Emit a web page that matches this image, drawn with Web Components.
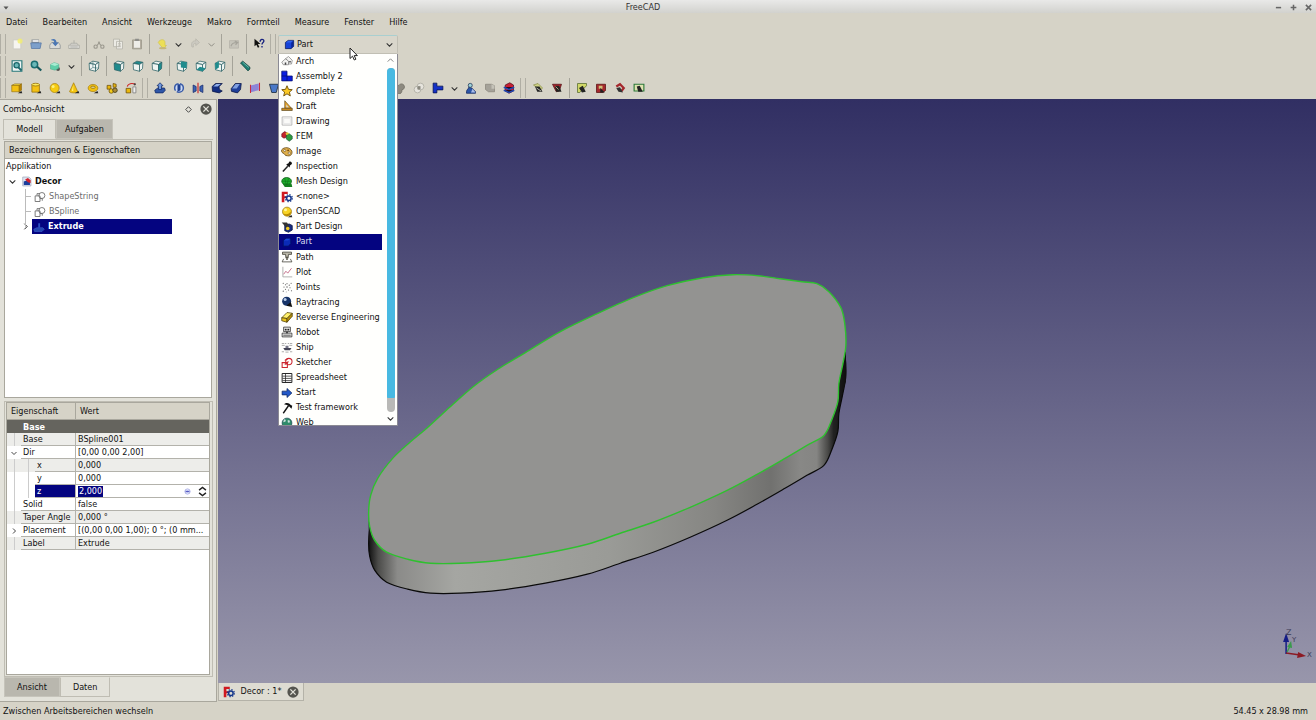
<!DOCTYPE html>
<html lang="de">
<head>
<meta charset="utf-8">
<title>FreeCAD</title>
<style>
html, body { margin: 0; height: 100%; }
body {
  --bg: #d6d3c7; --panel: #e3e2da; --tab: #b9b7ae; --line: #a9a79d; --sel: #040480;
  font: 9px/15px "DejaVu Sans Condensed", "DejaVu Sans", sans-serif;
  color: #111; background: var(--bg); overflow: hidden;
}
</style>
</head>
<body>
<app-window></app-window>
<script>
/* ---------- icons (16x16 drawings) ---------- */
const cube = (top, front, side, line) =>
  `<g stroke="${line}" stroke-width="1" stroke-linejoin="round"><path fill="${top}" d="M1.500 4.500 6.500 1.500 14.500 3 10 6z"/><path fill="${front}" d="M1.500 4.500 10 6v9l-8-2z"/><path fill="${side}" d="M10 6l4.500-3-.5 8.500L10 15z"/></g>`;
const teal = '#1f8b8d', pale = '#eef4f2', tl = '#2c6266';
const solid = body => body + '<path fill="#222" d="M9 15l5-3 1 3z"/>';
const gearF = '<path fill="#cf1820" d="M1 1h8v3H4.500v3H8v2.500H4.500V15H1z"/><g fill="none" stroke="#15378c"><circle cx="10.500" cy="9.500" r="3" stroke-width="2"/><circle cx="10.500" cy="9.500" r="4.700" stroke-width="1.600" stroke-dasharray="1.800 1.900"/></g>';
const ICONS = {
  'new': '<path fill="#f6f5f0" stroke="#c9c8c2" d="M3 2.500h10v12H3z"/><circle cx="12" cy="4" r="3.400" fill="#f4ef6a" opacity=".8"/>',
  open: '<path fill="#8a9097" d="M2 2h10v5H2z"/><path fill="#fff" d="M3.500 3h8v2h-8z"/><path fill="#7c9fcb" stroke="#5577a6" d="M1 6.500h14L13.500 14H2z"/>',
  save: '<path fill="#d9dad8" stroke="#8b8f92" d="M1 9.500 3.500 6h9L15 9.500V14H1z"/><path fill="#4a76b4" d="M3 2c4-2 7 0 7 4h3L8.500 11 4 6h3c0-2-1-3-4-3z"/>',
  print: '<path fill="#e0e0dc" stroke="#a4a49e" d="M1 9.500h14V14H1zM3 9l1-2h8l1 2M8 7V3"/><path stroke="#9c9c96" d="M3 12h10"/>',
  cut: '<g fill="none" stroke="#9a978d" stroke-width="1.500"><path d="M5.500 10 9 5M10.500 10 7 5"/><circle cx="3.500" cy="11.500" r="2.200"/><circle cx="12.500" cy="11.500" r="2.200"/></g>',
  copy: '<path fill="#ecebe5" stroke="#b2b0a7" d="M2 1.500h8v10H2zM6 4.500h8v10H6z"/><path stroke="#bbb9b0" d="M8 7.500h4M8 9.500h4M8 11.500h4"/>',
  paste: '<path fill="#b3ada0" stroke="#9a9588" d="M2 2.500h12v12H2z"/><path fill="#eeede8" d="M4 4h8v9H4z"/><path fill="#8d8d8a" d="M5.500 1h5v3h-5z"/>',
  undo: '<path fill="#ecdf57" stroke="#d2c654" d="M3 6c2-5 9-5 9 0v4h2l-4 4-4-4z"/><ellipse cx="9" cy="13.500" rx="5" ry="1.500" fill="#c5b77a"/>',
  redo: '<path fill="#cbc9c0" stroke="#b8b6ac" d="M4 12c-2-5 1-9 5-8V1l5 5-5 4V7C6 7 5 9 6 12z"/>',
  refresh: '<path fill="#c6c4ba" stroke="#b4b2a8" d="M2 3.500h12v10H2z"/><path fill="none" stroke="#a5a39a" stroke-width="1.500" d="M4 11c1-4 4-5 8-5M9 4l4 2-3 3"/>',
  whats: '<path fill="#111" d="M2 1v10l2.500-2L6.500 13l2-1-2-4H10z"/><path fill="none" stroke="#16207e" stroke-width="1.800" d="M9.500 5c0-4 5-4 5-1 0 2-2.500 2-2.500 4.500M12 10.500v2"/>',
  fit: '<path fill="#f1f6f5" stroke="#26777a" stroke-width="1.500" d="M1.500 1h13v14h-13z"/><circle cx="7.500" cy="7" r="3.500" fill="#6ab8b8" stroke="#18666a" stroke-width="1.800"/><path stroke="#18666a" stroke-width="2.400" d="m10 10 4 4"/>',
  zoom: '<circle cx="6" cy="6" r="4.200" fill="#6ab8b8" stroke="#1a6d70" stroke-width="2"/><path stroke="#17595c" stroke-width="3" d="m9.500 9 5.500 5"/>',
  draw: '<circle cx="12" cy="12" r="2.600" fill="#333" opacity=".8"/><path fill="#61cfa9" stroke="#3da584" stroke-width=".6" d="M2 6 7 3.500l6 2v5.500L8 13.500 2 12z"/><path fill="#a9ecd2" d="M2 6 7 3.500l6 2-5 2.500z"/>',
  axo: cube(pale, pale, pale, tl) + `<path fill="none" stroke="${tl}" stroke-width=".7" d="M6.500 2v8l8 1M6.500 10 2 13"/>`,
  front: cube(pale, teal, pale, tl), top: cube(teal, pale, pale, tl), right: cube(pale, pale, teal, tl),
  rear: cube(pale, pale, pale, tl) + `<path fill="${teal}" d="M6.500 2l8 1-.5 8-7.500-1z"/>`,
  bottom: cube(pale, pale, pale, tl) + `<path fill="${teal}" d="M2 13 6.500 9l7.500 2-4 4z"/>`,
  left: cube(pale, pale, pale, tl) + `<path fill="${teal}" d="M1.500 4.500 6.500 1.500V10L2 13z"/>`,
  measure: '<path fill="#1f7f74" stroke="#123f3b" d="m2 4 3-2.500 9.500 8V12l-2.500 2.500z"/><path stroke="#9bd6ca" stroke-width=".8" d="m5 3 8 7"/>',
  box: solid('<g stroke="#8f6a08" stroke-width=".8"><path fill="#fce94f" d="M1 4.500 5 2.500h9l-3 2z"/><path fill="#f3c114" d="M1 4.500h10v8.500H1z"/><path fill="#b98300" d="m11 4.500 3-2v8.500l-3 2z"/></g>'),
  cyl: solid('<path fill="#f3c114" stroke="#8f6a08" d="M2.500 3.500v10h10v-10z"/><ellipse cx="7.500" cy="3.500" rx="5" ry="1.800" fill="#fdea5b" stroke="#8f6a08"/>'),
  sphere: solid('<circle cx="7.500" cy="8" r="6" fill="#f6cb12" stroke="#a98310"/><circle cx="5.500" cy="6" r="2" fill="#fdf07c"/>'),
  cone: solid('<path fill="#f4c410" stroke="#a98310" d="M7.500 1 13 13c-2 2-9 2-11 0z"/><path fill="#fdf07c" d="M7 4 5 12h2z"/>'),
  torus: solid('<ellipse cx="8" cy="8" rx="6.500" ry="4.800" fill="#f2c010" stroke="#a98310"/><ellipse cx="8" cy="7" rx="3" ry="1.500" fill="#e6dca0" stroke="#8c6a08"/>'),
  prims: '<path fill="#e9b70e" stroke="#6a4b05" d="M1.500 4.500h5v5h-5zM9.500 2l4 1v4h-4z"/><circle cx="7" cy="12" r="3" fill="#f4cb1a" stroke="#6a4b05"/><circle cx="12" cy="11" r="3" fill="#a98b3a" stroke="#3e350f"/>',
  builder: '<path fill="#e9b70e" stroke="#6a4b05" d="M1.500 8.500h6v6h-6z"/><path fill="#eee" stroke="#777" d="M10.500 6.500h4v8h-4z"/><path fill="none" stroke="#cc2222" stroke-width="1.500" d="M3 6c1-4 6-5 11-3"/><circle cx="13" cy="3" r="1.500" fill="#444"/>',
  extrude: '<path fill="#2e56a8" stroke="#132a66" d="m1 11 4-3h9l1 3-3 3.500H2z"/><path fill="#6e97de" stroke="#132a66" d="M8 1l4 4h-2v5H6V5H4z"/>',
  revolve: '<circle cx="8" cy="8" r="5.800" fill="#cfdcf5" stroke="#3a5ca8" stroke-width="2" stroke-dasharray="12 2"/><path fill="#1d3f92" d="M6 3h4v8l-4 2z"/>',
  mirror: '<path fill="#3b62b6" stroke="#15296a" d="m1.500 4 4 2v6l-4 2zM14.500 4l-4 2v6l4 2z"/><path stroke="#c22" stroke-width="1.500" d="M8 1v14"/>',
  fillet: '<path fill="#122d80" stroke="#0b1644" d="M1.500 6 6 2h9l-4 4c-1 3 1 5 4 6l-4 2.500-9-2z"/><path fill="#8faee8" d="m3 6 4-3.500h6L9 6z"/>',
  chamfer: '<path fill="#1f3f9a" stroke="#0b1644" d="M1.500 9 7 2h8l-1 8-4 4.500-8-2z"/><path fill="#7f9fe0" d="m3 8.500 4.500-6H13l-4 6z"/>',
  ruled: '<path fill="#8d84d8" d="M2 4.500 13 2v9L2 13.500z"/><path fill="none" stroke="#c92a3f" stroke-width="1.400" d="M2 3.500v11M14 1v11"/>',
  loft: '<path fill="#4a78c8" stroke="#123" d="M2 3h12l-3 11H5z"/>',
  union: '<path fill="#8d8a80" stroke="#6e6b62" d="M1.500 8.500a4 4 0 0 1 5-4 4 4 0 1 1 4 6 5 5 0 1 1-9-2z"/>',
  common: '<circle cx="6" cy="10" r="4.500" fill="#e6e4dd" stroke="#aaa89e"/><circle cx="10" cy="6" r="4.500" fill="#e6e4dd" stroke="#aaa89e"/><path fill="#8a887e" d="M6 5.500h4v4.500H6z"/>',
  assembly: '<path fill="#1330c8" stroke="#04104e" d="M1.500 1.500h5v4h8v5h-8v4h-5z"/>',
  asm2: '<path fill="#0a1ee0" stroke="#040e6e" d="M1 1.500h7v6.500h7v6.500H1z"/><path stroke="#040e6e" d="M8 8v6.500M1 8h7"/>',
  section: '<path fill="#2c56a8" stroke="#10245e" d="M2 13c0-3 3-4 3-6l4 1 5 5v2H2z"/><circle cx="7" cy="4.500" r="2.700" fill="#9fd4d8" stroke="#235"/><path fill="#a9bce8" d="M10 9l4 5H8z"/>',
  grey: '<path fill="#a5a299" stroke="#89867c" d="M2 3h8l4 2v8H6l-4-3z"/><path fill="#c4c2b8" d="M10 3l4 2v4h-4z"/>',
  cross: '<path fill="#c81e34" stroke="#54101c" d="M3 4 9 1l5 3v8l-6 3-5-3z"/><path stroke="#2248b4" stroke-width="2" d="M1 7l7 3 7-3M1 11l7 3 7-3"/>',
  mlin: '<path fill="#cfd285" stroke="#8a8d4a" d="M2 4l6-2 6 6-3 3z"/><path fill="#222" d="M4 6h6l4 7H7z"/><path stroke="#e8e8d8" d="m6 8 6 4"/>',
  mang: '<path fill="#b3222a" stroke="#4d1115" d="M2 3h12l-3 9-4 1z"/><path fill="#222" d="M5 5h6l3 8H7z"/><path stroke="#dc9" d="m6 6 4 4"/>',
  mref: '<path fill="#d0d768" stroke="#54682e" d="M2 2h12v3L5 14H2z"/><path fill="#222" d="m4 8 5-3 4 8-5 1z"/>',
  mclr: '<path fill="#a5282d" stroke="#511" d="M2 3h12v8l-3 3H2z"/><path fill="#cfc078" d="M5 5h5v4H5z"/><path fill="#222" d="m7 8 6 6H7z"/>',
  mtog: '<path fill="none" stroke="#a5282d" stroke-width="3" d="m3 6 5-3 5 5-3 4"/><path fill="#333" d="m3 8 5-1 4 7-6-1z"/>',
  mdel: '<path fill="#dfe2b0" stroke="#2d7a3a" stroke-width="1.500" d="M1.500 3h13v9h-13z"/><path fill="#222" d="m5 6 4-1 4 8H7z"/>',
  arch: '<g fill="#f2f2f0" stroke="#777" stroke-width=".9"><path d="M1 9.500 6 5l4 3v5H3z"/><path d="m6 5 4-3 5 5-1 5h-4V8z"/></g><path fill="#444" d="M5 10h2v3H5zM11 8h2v2h-2z"/>',
  complete: '<path fill="#fbc926" stroke="#6b4c06" stroke-width="1.200" stroke-linejoin="round" d="m8 1 2 4.800 5 .4-3.800 3.300 1.200 5L8 11.800l-4.400 2.700 1.200-5L1 6.200l5-.4z"/>',
  draft: '<path fill="#e7a52c" stroke="#4e3a10" stroke-width=".8" d="M5 1 14 11H5z"/><path fill="#cfd6da" d="m7 6 3.500 4H7z"/><path fill="#c98a20" stroke="#4e3a10" stroke-width=".8" d="M1 11h14v3H1z"/>',
  drawing: '<path fill="#fafaf8" stroke="#aaa" d="M1.500 2.500h13v11h-13z"/><path fill="none" stroke="#e2e2e0" d="M3.500 4.500h9v7h-9z"/>',
  fem: '<path fill="#c3232b" stroke="#501" stroke-width=".7" d="m1 5 4-3 3 2v5l-4 2-3-2z"/><path fill="#2f9b3d" stroke="#143" stroke-width=".7" d="m7 7 4-2 4 3v4l-4 3-4-3z"/><path fill="#e2c83a" d="M6 4l3-1 2 2-4 2z"/>',
  image: '<path fill="#e0b04a" stroke="#5a3c0a" d="M1 5c3-4 11-4 13.500 2 1 4-2 7-6 6C5 13 5 11 4 10 2 9.500 0 8 1 5z"/><circle cx="5" cy="6" r="1.400" fill="#fff" stroke="#5a3c0a" stroke-width=".7"/><circle cx="9.500" cy="5.800" r="1.300" fill="#7a4d10"/><circle cx="11" cy="9.500" r="1.500" fill="#fff" stroke="#5a3c0a" stroke-width=".7"/>',
  inspection: '<path fill="#111" d="m8 4 2-1 1-2c2-1 4 1 3.500 3L12 6l-.5 2.500L7 5z"/><path stroke="#222" stroke-width="2" d="M9 7 2.500 14"/>',
  mesh: '<ellipse cx="7.500" cy="7" rx="6.500" ry="5" fill="#1fae2c" stroke="#0b5a14"/><path fill="#15801f" d="M2 10h12l1 4.500H5z"/><path fill="none" stroke="#0e6a18" stroke-width=".7" d="M2 7h11M5 3l2 9M10 3 8 12"/>',
  none: gearF, openscad: solid('<circle cx="8" cy="7.500" r="6" fill="#f8d323" stroke="#9a7608"/><path fill="#b98b00" d="M3 10c4 2 8 1 10-3 1 7-6 9-10 3z"/><circle cx="6" cy="5" r="2" fill="#fff59a"/>'),
  partdesign: '<path fill="#162d86" stroke="#0a1238" d="m5 5 6-1 4 2v6l-5 3-5-2z"/><path fill="#333" d="M1 2l7 0 3 5-3 3z"/><circle cx="9" cy="10" r="2.400" fill="#f0c822"/>',
  part: '<path fill="#1642d8" stroke="#04124e" d="M2 5 6 2h8v8.500L10.500 14H2z"/><path fill="#0a2596" d="m10.500 5.500 3-3v8l-3 3z"/><path fill="#2f62f0" d="M3 5 6.500 2.500H13L10 5z"/>',
  partdim: '<path fill="#0a2bb8" stroke="#02105e" d="M3 6 6.500 3H13v7l-3 3.500H3z"/><path fill="#1c44d4" d="M4 6 7 3.500h5L9.500 6z"/>',
  path: '<path fill="#bbb8aa" stroke="#3b3930" d="M2 1.500h12v3H10l-.500 4h-3l-.500-4H2z"/><path fill="#e9e7da" stroke="#3b3930" d="M6.500 8.500h3L8 12z"/><path fill="none" stroke="#3b3930" d="M1.500 14.500h13l-2-4M3.500 10.500l-2 4"/>',
  plot: '<path fill="none" stroke="#999" d="M2.500 1v13.500H15"/><path fill="none" stroke="#b4486c" d="m3.500 11 3-4 2.500 2.500L14 3"/>',
  points: '<g fill="#555"><circle cx="3" cy="3" r=".8"/><circle cx="6" cy="5" r=".8"/><circle cx="4" cy="8" r=".8"/><circle cx="8" cy="3.500" r=".7"/><circle cx="8" cy="8" r=".9"/><circle cx="11" cy="5.500" r=".8"/><circle cx="13.500" cy="3" r=".8"/><circle cx="12" cy="9" r=".8"/><circle cx="6" cy="11" r=".8"/><circle cx="10" cy="12" r=".8"/><circle cx="3" cy="13.500" r=".8"/><circle cx="14" cy="13" r=".8"/><circle cx="7" cy="14.500" r=".6"/></g>',
  ray: '<circle cx="7.500" cy="7" r="6" fill="#173468"/><circle cx="5.500" cy="4.500" r="2" fill="#b9cbe8"/><path fill="#111" d="m7 13 6-5 2 6.500z"/>',
  reverse: '<g stroke="#4b3c05" stroke-linejoin="round"><path fill="#fff06a" d="M1 9 8 2l7 1-7 7z"/><path fill="#e8c31c" d="m1 9 7 1v5l-7-2z"/><path fill="#b8920c" d="m8 10 7-7v4l-7 8z"/></g>',
  robot: '<path fill="#f4f4f2" stroke="#222" d="M3.500 1.500h9v6h-9zM1.500 9.500h13v5h-13z"/><path fill="#222" d="M5 3.500h2.500V6H5zM8.500 3.500H11V6H8.500zM3 11.500h10v1H3zM7 7.500h2v2H7z"/>',
  ship: '<g fill="none" stroke="#888" stroke-width=".9"><path d="M1 2h3M5 2h2M9 2h2M12 2h3M1 4.500h4M11 4.500h4M1 13h3M6 13.500h4M12 13h3"/></g><path fill="#445" d="M3 8h11l-2 3H5z"/><path fill="#778" d="M6 5h4v3H6z"/>',
  sketch: '<g fill="none" stroke="#cc2630" stroke-width="1.400"><path d="M1.500 7.500h7v6.500h-7zM5 4.500 9.500 2"/><circle cx="10.500" cy="6" r="4.200"/><path d="m5 10 5-4"/></g>',
  sheet: '<path fill="#fff" stroke="#222" stroke-width="1.300" d="M1.500 2h13v12h-13z"/><path stroke="#222" d="M2 5.500h12M2 8.500h12M2 11.500h12M6 2v12"/>',
  start: '<path fill="#2258c8" stroke="#0a2462" stroke-linejoin="round" d="M1.500 5.500H8V2l6.500 6L8 14v-3.500H1.500z"/>',
  test: '<path stroke="#111" stroke-width="1.800" d="M3 15 10 5"/><path fill="#111" d="M4 3c3-3 7-2 9 1l2 1-1 4-3-3-3-2z"/>',
  web: '<circle cx="8" cy="8" r="6.500" fill="#2f8b6a" stroke="#1c4a54"/><path fill="#cfe3e0" d="M4 3c2 0 3 1 2 3L3 7zM9 4l3 1-1 3-2-1z"/>',
  doc: '<path fill="#dfe4f0" stroke="#9aa2b8" d="M2.500 1.500h9l3 3v10h-12z"/><path fill="#1c3f9c" d="M4 8l5-2 4 2v5H4z"/><path fill="#d3202c" d="M6 5l4-2 4 3v4l-4-1z"/>',
  sketchgrey: '<g fill="none" stroke="#6f6f6f" stroke-width="1.200"><path d="M1.500 6.500h6.500V14H1.500zM4 6V3.500h4"/><circle cx="10.500" cy="6" r="4"/><path d="M8 10h3v3"/></g>',
  extrudesel: '<path fill="#2447b0" stroke="#3c60cc" stroke-width=".8" d="m1 11 4-2h8l2 2-3 3H2z"/><path fill="#2c52c4" d="M7 3h2.500v6H7z"/>',
  chevron: '<path fill="none" stroke="#333" stroke-width="1.800" d="m3 6 5 5 5-5"/>',
  chevrondim: '<path fill="none" stroke="#8d8b82" stroke-width="1.700" d="m3 6 5 5 5-5"/>',
  chevronup: '<path fill="none" stroke="#777" stroke-width="1.600" d="m3 10 5-5 5 5"/>',
  chevronright: '<path fill="none" stroke="#222" stroke-width="1.700" d="m6 3 5 5-5 5"/>',
  close: '<circle cx="8" cy="8" r="7.500" fill="#55554f"/><path stroke="#e3e2da" stroke-width="1.800" d="m4.500 4.500 7 7m0-7-7 7"/>',
  diamond: '<path fill="none" stroke="#444" stroke-width="1.700" d="m8 3 5 5-5 5-5-5z"/>',
  wmenu: '<path fill="#555" d="M3 5h10l-5 6z"/>',
  min: '<path fill="#666" d="M2 6.500h12v3.500H2z"/>',
  max: '<path stroke="#666" stroke-width="3.500" d="M8 1.500v13M1.500 8h13"/>',
  x: '<path stroke="#666" stroke-width="3.500" d="m2 2 12 12M14 2 2 14"/>',
  spin: '<path fill="none" stroke="#222" stroke-width="2" d="m3 6 5-4 5 4M3 10l5 4 5-4"/>',
  fx: '<circle cx="8" cy="8" r="6" fill="#eef0ff" stroke="#9096dc" stroke-width="1.500"/><path stroke="#4a50c0" stroke-width="1.800" d="M5 6v4M8 6v4M11 6v4M4 8h8"/>'
};
const RESET = `button{font:inherit;color:inherit;border:0;background:none;padding:0;margin:0}*{box-sizing:border-box}`;
function define(name, render) {
  customElements.define(name, class extends HTMLElement {
    constructor() { super(); this.attachShadow({ mode: 'open' }); }
    connectedCallback() { const t = document.createElement('template'); t.innerHTML = `<style>${RESET}</style>` + render(this); this.shadowRoot.replaceChildren(t.content.cloneNode(true)); }
  });
}
const icon = (n, size = 12) => `<ui-icon name="${n}" size="${size}"></ui-icon>`;

define('ui-icon', el => `<style>:host{display:inline-flex;flex:none}svg{display:block}</style>
<svg width="${el.getAttribute('size')}" height="${el.getAttribute('size')}" viewBox="0 0 16 16" aria-hidden="true">${ICONS[el.getAttribute('name')]}</svg>`);

define('title-bar', () => `<style>
:host{display:grid;grid-template-columns:1fr auto 1fr;align-items:center;height:13px;padding:0 4px 0 2px;background:linear-gradient(#e9e9e8,#d2d2ce)}
button{display:flex;line-height:0}.r{display:flex;justify-content:flex-end;gap:8px}span{color:#333;padding-right:28px}</style>
<button aria-label="Fenstermenü">${icon('wmenu', 8)}</button><span><slot></slot></span>
<div class="r"><button aria-label="Minimieren">${icon('min', 7)}</button><button aria-label="Maximieren">${icon('max', 7)}</button><button aria-label="Schließen">${icon('x', 7)}</button></div>`);

define('menu-bar', el => `<style>:host{display:block}nav{display:flex;height:19px;align-items:center;padding-left:6px;gap:15px}</style>
<nav>${el.getAttribute('items').split(',').map(t => `<button>${t}</button>`).join('')}</nav>`);

/* items: icon names; "|" separator, "||" grip, "v" / "w" drop arrows */
define('tool-bar', el => `<style>
:host{display:flex;align-items:center;height:22px}
button{width:19px;height:20px;display:flex;align-items:center;justify-content:center}
.v{width:14px}.s{width:6px;height:20px;display:flex;justify-content:center}.s::before{content:"";width:1px;background:#a5a399}
.g{width:10px;height:20px;display:flex;justify-content:flex-end;padding-right:2px}.g::before{content:"";width:4px;border:solid #b0aea4;border-width:0 1px}
.g:first-of-type{width:7px;padding-right:1px}</style>
${el.getAttribute('items').split(' ').map((n, i) => n === '|' ? '<div class="s"></div>' : n === '||' ? '<div class="g"></div>' :
  n === 'v' || n === 'w' ? `<button class="v" aria-label="Mehr">${icon(n === 'v' ? 'chevron' : 'chevrondim', 9)}</button>` :
  `<button aria-label="${n}">${icon(n)}</button>`).join('')}<slot></slot>`);

const BENCHES = [['Arch','arch'],['Assembly 2','asm2'],['Complete','complete'],['Draft','draft'],['Drawing','drawing'],['FEM','fem'],['Image','image'],['Inspection','inspection'],['Mesh Design','mesh'],['&lt;none&gt;','none'],['OpenSCAD','openscad'],['Part Design','partdesign'],['Part','partdim'],['Path','path'],['Plot','plot'],['Points','points'],['Raytracing','ray'],['Reverse Engineering','reverse'],['Robot','robot'],['Ship','ship'],['Sketcher','sketch'],['Spreadsheet','sheet'],['Start','start'],['Test framework','test'],['Web','web']];

define('workbench-select', () => `<style>
:host{display:block;position:relative;width:120px;height:19px;z-index:5}
label{display:flex;align-items:center;height:19px;padding:0 3px 0 5px;border:1px solid #c1bfb4;border-top-color:#a9cfd0;border-radius:2px;background:#d9d6cb;position:relative}
select{appearance:none;flex:1;min-width:0;border:0;background:none;font:inherit;color:inherit;padding:0 0 0 2px;outline:0}
.pop{position:absolute;top:19px;left:0;width:120px;height:372px;display:flex;background:#fffffd;border:1px solid #8b8a94;border-width:0 1px 1px}
ul{height:377px;margin:0;padding:0;list-style:none;display:grid;grid-template-rows:repeat(25,1fr)}
.clip{flex:1;overflow:hidden}
li{display:flex;align-items:center;gap:3px;padding-left:2px;margin-right:2px;white-space:nowrap}
li[aria-selected=true]{background:var(--sel);color:#dcdcf0}
.bar{width:13px;display:flex;flex-direction:column;align-items:center;justify-content:space-between;padding:2px 0 2px}
.track{flex:1;width:8px;margin:3px 0 2px;border-radius:4px;background:#b9b9b7;display:flex;flex-direction:column}
.thumb{flex:24;background:#48b9e2;border-radius:4px 4px 1px 1px}.rest{flex:1}
.ptr{position:absolute;left:71px;top:12px}</style>
<label>${icon('part', 11)}<select aria-label="Arbeitsbereich"><option>Part</option></select>${icon('chevron', 9)}</label>
<div class="pop"><div class="clip"><ul role="listbox">${BENCHES.map(b => `<li role="option" aria-selected="${b[0] === 'Part'}">${icon(b[1])}${b[0]}</li>`).join('')}</ul></div>
<div class="bar">${icon('chevronup', 9)}<div class="track"><div class="thumb"></div><div class="rest"></div></div>${icon('chevron', 9)}</div></div>
<svg class="ptr" width="9" height="14" viewBox="0 0 9 14"><path fill="#fff" stroke="#222" d="M1 1v10.500l2.500-2.300L5.300 13l1.600-.8L5.200 8.600h3.200z"/></svg>`);

define('tab-strip', el => { const [a, ...t] = el.getAttribute('items').split(','); return `<style>
:host{display:flex;height:20px}button{padding:0 12px;background:var(--tab);height:20px;border:1px solid #c6c4bb}
:host([side=top]) button{padding:0 8px;min-width:53px}
button[aria-selected=true]{background:var(--panel);border-color:#bfbdb3}
:host([side=top]) [aria-selected=true]{border-bottom-color:var(--panel)}:host([side=bottom]) [aria-selected=true]{border-top-color:var(--panel)}</style>
${t.map((x, i) => `<button role="tab" aria-selected="${i == a}">${x}</button>`).join('')}`; });

define('model-tree', () => `<style>
:host{display:flex;flex-direction:column;border:1px solid var(--line);background:#fff}
header{height:17px;line-height:16px;padding-left:4px;background:var(--bg);border-bottom:1px solid var(--line)}
p{margin:0;padding-left:1px}ul{list-style:none;margin:0;padding:0}
.row{display:flex;align-items:center;height:15px;white-space:nowrap}.row button{width:14px;height:15px;display:flex;align-items:center;justify-content:center}
.row.root{gap:2px;font-weight:bold}
.l2{margin-left:20px;position:relative}.l2::before{content:"";position:absolute;left:0;top:0;height:38px;border-left:1px solid #bbb}
.l2 .row{color:#6c6c6c;padding-left:8px}.l2 .label{display:flex;align-items:center;gap:3px;height:15px}
.l2 .tick{padding-left:0}.tick::before{content:"";width:6px;margin-right:2px;border-top:1px solid #bbb}
.l2 .sel{padding-left:0;margin-left:-7px}.sel .label{flex:none;width:140px;background:var(--sel);color:#fff;font-weight:bold}
.label{padding-left:1px}</style>
<header>Bezeichnungen &amp; Eigenschaften</header><p>Applikation</p>
<ul role="tree"><li role="treeitem"><div class="row root"><button aria-label="Zuklappen">${icon('chevron', 9)}</button>${icon('doc', 11)}<span class="label">Decor</span></div>
<ul class="l2" role="group">
<li class="row tick" role="treeitem"><span class="label">${icon('sketchgrey')}ShapeString</span></li>
<li class="row tick" role="treeitem"><span class="label">${icon('sketchgrey')}BSpline</span></li>
<li class="row sel" role="treeitem"><button aria-label="Aufklappen">${icon('chevronright', 9)}</button><span class="label">${icon('extrudesel')}Extrude</span></li>
</ul></li></ul>`);

const PROPS = [['Base','BSpline001'],['Dir','[0,00 0,00 2,00]','chevron'],['x','0,000','',1],['y','0,000','',1],['z','','',1],['Solid','false'],['Taper Angle','0,000 °'],['Placement','[(0,00 0,00 1,00); 0 °; (0 mm...','chevronright'],['Label','Extrude']];
define('property-table', () => `<style>
:host{display:block;border:1px solid var(--line);background:#fff}
table{width:100%;border-collapse:separate;border-spacing:0;table-layout:fixed}
th,td{padding:0;font-weight:normal;text-align:left;height:13px;line-height:12px;white-space:nowrap;overflow:hidden}
thead th{height:17px;background:var(--bg);border-bottom:1px solid var(--line);padding-left:4px}
thead th:first-child{width:69px;border-right:1px solid var(--line)}
.cat th{background:#65645e;color:#fff;font-weight:bold;padding-left:16px}
tbody td{border-bottom:1px solid #b3b2ab;padding-left:2px}tbody th[scope=row]{border-right:1px solid #b3b2ab}
.in{display:flex;height:13px}.in>i{width:14px;flex:none;display:flex;align-items:center;justify-content:center;font-style:normal;background:linear-gradient(#ccc,#ccc) 7px 0/1px 100% no-repeat}
.in>i.x{background:none}
.in>span{flex:1;padding-left:2px;border-bottom:1px solid #b3b2ab}
.alt td,.alt .in{background:#ededea}
.z td,.z .in{background:#fff}.z span{background:var(--sel);color:#fff}.ed{display:flex;align-items:center;height:12px;padding-right:1px;gap:6px}
input{width:25px;height:11px;border:0;padding:0 0 0 1px;font:inherit;line-height:11px;background:var(--sel);color:#fff;outline:0}
.ed button{display:flex}.ed .fx{margin-left:auto}</style>
<table><thead><tr><th>Eigenschaft</th><th>Wert</th></tr></thead><tbody><tr class="cat"><th colspan="2">Base</th></tr>
${PROPS.map((p, i) => `<tr class="${i % 2 ? '' : 'alt'}${p[0] === 'z' ? ' z' : ''}"><th scope="row"><div class="in"><i class="${p[2] ? 'x' : ''}">${p[2] ? icon(p[2], 8) : ''}</i>${p[3] ? '<i></i>' : ''}<span id="p${i}">${p[0]}</span></div></th><td>${p[0] === 'z' ?
  `<div class="ed"><input value="2,000" aria-labelledby="p${i}"><button class="fx" aria-label="Ausdruck">${icon('fx', 7)}</button><button aria-label="Schrittweite">${icon('spin', 11)}</button></div>` : p[1]}</td></tr>`).join('')}
</tbody></table>`);

define('dock-panel', () => `<style>
:host{display:flex;flex-direction:column;flex:none;width:217px;background:var(--panel);border:1px solid var(--line);border-left:0;padding:0 3px 4px}
header{display:flex;align-items:center;gap:7px;height:18px;line-height:18px;padding-right:1px}header span{margin-right:auto}header button{display:flex}
tab-strip[side=top]{margin-top:1px}
.body{flex:1;display:flex;flex-direction:column;border:1px solid #bfbdb3;border-width:1px 0 0;padding:1px 0 0 1px;min-height:0}
model-tree{height:257px;margin-right:1px}
.lower{flex:1;margin-top:3px;border:1px solid #bfbdb3;padding:0 2px 1px 1px;display:flex}property-table{flex:1;min-width:0}
tab-strip[side=bottom]{margin-left:1px}</style>
<header><span>Combo-Ansicht</span><button aria-label="Abdocken">${icon('diamond', 9)}</button><button aria-label="Schließen">${icon('close', 12)}</button></header>
<tab-strip side="top" items="0,Modell,Aufgaben"></tab-strip>
<div class="body"><model-tree></model-tree><div class="lower"><property-table></property-table></div></div>
<tab-strip side="bottom" items="0,Ansicht,Daten"></tab-strip>`.replace('items="0,Ansicht', 'items="1,Ansicht'));

/* closed Catmull-Rom curve through the outline of the extruded face */
const OUTLINE = [[368,512],[370,496],[377,479],[392,459],[408,444],[427,428],[450,407],[473,387],[497,370],[525,353],[560,332],[597,314],[633,298],[667,286],[703,278],[733,275],[758,276],[780,279],[802,282],[817,284],[829,292],[841,308],[845,325],[846,346],[843,364],[839,384],[838,402],[832,420],[824,436],[807,446],[785,459],[757,475],[727,491],[690,508],[653,523],[620,534],[587,545],[545,554],[500,561],[460,564],[430,564],[407,560],[386,553],[374,541],[369,527]];
function curve(p) {
  const n = p.length, at = i => p[(i + n) % n]; let d = `M${p[0]}`;
  for (let i = 0; i < n; i++) { const [a, b, c, e] = [at(i - 1), at(i), at(i + 1), at(i + 2)];
    d += `C${b[0] + (c[0] - a[0]) / 6} ${b[1] + (c[1] - a[1]) / 6} ${c[0] - (e[0] - b[0]) / 6} ${c[1] - (e[1] - b[1]) / 6} ${c}`; }
  return d + 'z';
}
define('model-view', () => { const d = curve(OUTLINE); return `<style>
:host{display:flex;flex:1;min-height:0;background:linear-gradient(#312f63,#9896ab)}
svg{width:100%;height:100%;display:block}text{font:8px "DejaVu Sans",sans-serif;fill:#3a3a55}</style>
<svg viewBox="218 99 1098 585" preserveAspectRatio="xMidYMid meet" role="img" aria-label="3D-Ansicht">
<defs><linearGradient id="side" gradientUnits="userSpaceOnUse" x1="368" x2="848" y1="0" y2="0">
<stop offset="0" stop-color="#111"/><stop offset=".02" stop-color="#4c4c4a"/><stop offset=".06" stop-color="#8b8b89"/><stop offset=".18" stop-color="#a5a6a2"/><stop offset=".5" stop-color="#9a9b97"/><stop offset=".72" stop-color="#868683"/><stop offset=".84" stop-color="#71716f"/><stop offset=".9" stop-color="#888886"/><stop offset=".935" stop-color="#858583"/><stop offset=".958" stop-color="#4a4a48"/><stop offset=".97" stop-color="#222"/><stop offset="1" stop-color="#0c0c0c"/></linearGradient></defs>
<path d="${d}" transform="translate(0 30)" fill="url(#side)" stroke="#0a0a0a" stroke-width="1.200"/>
<path d="M368 512v30L840 400l6-18v-30z" fill="url(#side)"/>
<path d="${d}" fill="#939391" stroke="#2fc02f" stroke-width="1.400"/>
<path stroke="#141c86" stroke-width="1.500" d="M1287 655v-14"/><path fill="#141c86" d="m1284 643 3-9 3 9z"/>
<path stroke="#8c1a24" stroke-width="1.500" d="m1287 654 14 2"/><path fill="#8c1a24" d="m1299 653 8 4-9 2z"/>
<path stroke="#3a9a4c" stroke-width="1.300" d="m1288 653 3-6"/><path fill="#3a9a4c" d="m1288 648 4-6 1 7z"/>
<text x="1287" y="636">Z</text><text x="1293" y="643" style="font-size:7px">Y</text><text x="1308" y="658" style="font-size:7px">X</text></svg>`; });

define('document-tab', () => `<style>
:host{display:flex;height:19px}div{display:flex;align-items:center;height:18px;width:86px;padding:0 4px;background:#dedcd2;border:1px solid #b4b2a8;border-top:0;white-space:nowrap}
.t{margin:0 auto}.c{display:flex}</style>
<div>${icon('none')}<button class="t" role="tab"><slot></slot></button><button class="c" aria-label="Schließen">${icon('close', 12)}</button></div>`);

define('status-bar', () => `<style>:host{display:flex;justify-content:space-between;align-items:center;height:18px;padding:0 8px 0 3px}</style>
<span><slot></slot></span><span><slot name="size"></slot></span>`);

define('app-window', () => `<style>
:host{display:flex;flex-direction:column;height:100vh}
.tools{padding-top:1px}main{flex:1;display:flex;gap:1px;min-height:0}.mdi{flex:1;display:flex;flex-direction:column;min-width:0}</style>
<title-bar>FreeCAD</title-bar>
<menu-bar items="Datei,Bearbeiten,Ansicht,Werkzeuge,Makro,Formteil,Measure,Fenster,Hilfe"></menu-bar>
<div class="tools">
<tool-bar items="|| new open save print | cut copy paste | undo v redo w | refresh | whats ||"><workbench-select></workbench-select></tool-bar>
<tool-bar items="|| fit zoom draw v | axo | front top right | rear bottom left | measure"></tool-bar>
<tool-bar items="|| box cyl sphere cone torus prims builder || extrude revolve mirror fillet chamfer ruled loft | grey grey grey grey grey | union common assembly v section grey cross || mlin mang | mref mclr mtog mdel"></tool-bar></div>
<main><dock-panel></dock-panel><div class="mdi"><model-view></model-view><document-tab>Decor : 1*</document-tab></div></main>
<status-bar>Zwischen Arbeitsbereichen wechseln<span slot="size">54.45 x 28.98 mm</span></status-bar>`);
</script>
</body>
</html>
